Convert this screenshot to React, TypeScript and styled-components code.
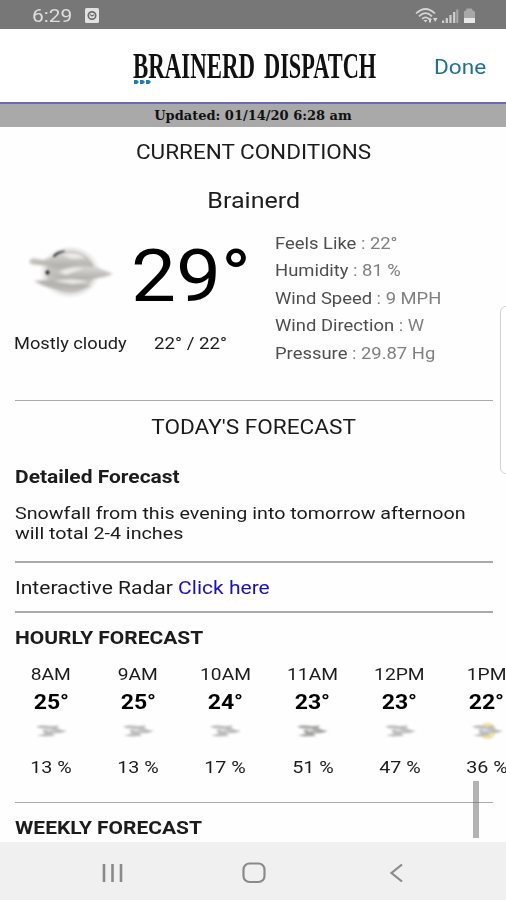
import React from 'react';
import styled, { createGlobalStyle } from 'styled-components';

const GlobalStyle = createGlobalStyle`
  * { box-sizing: border-box; }
  html, body { margin: 0; padding: 0; background: #fefefe; overflow: hidden; }
  body { font-family: Roboto, "Liberation Sans", sans-serif; color: #1c1c1c; }
`;

const Screen = styled.div`
  position: relative;
  width: 506px;
  height: 900px;
  overflow: hidden;
  display: flex;
  flex-direction: column;
  background: #fefefe;
`;

const Label = styled.span<{ $size: number; $stretch?: number; $from?: string; $bold?: boolean; $color?: string }>`
  display: inline-block;
  white-space: nowrap;
  font-size: ${(p) => p.$size}px;
  font-weight: ${(p) => (p.$bold ? 700 : 400)};
  color: ${(p) => p.$color ?? 'inherit'};
  transform: scaleX(${(p) => p.$stretch ?? 1.14});
  transform-origin: ${(p) => p.$from ?? 'left'} center;
`;

const StatusBar = styled.div`
  height: 29px;
  flex: none;
  display: flex;
  align-items: center;
  justify-content: space-between;
  padding: 2px 29px 0 32px;
  background: #777;
  color: #dedede;
`;

const StatusGroup = styled.div`
  display: flex;
  align-items: center;
`;

const ClockIcon = styled.svg`
  margin-left: 17px;
`;

const Header = styled.header`
  height: 75px;
  flex: none;
  display: grid;
  grid-template-columns: 133px 247px 1fr;
  align-items: center;
  background: #fff;
  border-bottom: 2px solid #6a6ab8;
`;

const Logo = styled.div`
  grid-column: 2;
  display: grid;
  grid-template-columns: 131px 116px;
  grid-template-rows: 36px 5px;
  height: 41px;
  margin-top: 4px;
  color: #111;
  font-family: "Liberation Serif", serif;
  line-height: 37px;
`;

const Word = styled.div`
  width: 100%;
  min-width: 0;
  height: 36px;
`;

const Dots = styled.svg`
  display: block;
  margin: -3.5px 0 0 1px;
`;

const DoneButton = styled.button`
  border: 0;
  padding: 0;
  margin: 3px 0 0 54px;
  background: none;
  font-family: inherit;
  text-align: left;
`;

const Updated = styled.div`
  height: 23px;
  flex: none;
  text-align: center;
  background: #a9a9a9;
  color: #111;
  font: 700 13px/23px "DejaVu Serif", serif;
`;

const Content = styled.main`
  flex: 1;
  min-height: 0;
  overflow: hidden;
  display: flex;
  flex-direction: column;
  padding: 0 13px 0 14.5px;
`;

const Line = styled.div<{ $h: number; $top?: number; $center?: boolean }>`
  flex: none;
  height: ${(p) => p.$h}px;
  line-height: ${(p) => p.$h}px;
  margin-top: ${(p) => p.$top ?? 0}px;
  text-align: ${(p) => (p.$center ? 'center' : 'left')};
  white-space: nowrap;
`;

const Rule = styled.div<{ $top: number }>`
  flex: none;
  height: 1.5px;
  margin-top: ${(p) => p.$top}px;
  background: #aaa;
`;

const Current = styled.section`
  flex: none;
  height: 143px;
  margin-top: 12px;
  display: grid;
  grid-template-columns: 260px 1fr;
`;

const Reading = styled.div`
  display: grid;
  grid-template-columns: 116px 1fr;
  grid-template-rows: 90px 52px;
  align-items: center;
`;

const Condition = styled.div`
  padding-left: 13px;
`;

const BigTemp = styled.div`
  height: 80px;
  line-height: 80px;
  margin-top: 9px;
  color: #000;
`;

const Caption = styled.div<{ $indent?: number }>`
  padding-left: ${(p) => p.$indent ?? 0}px;
  margin-left: -0.5px;
`;

const Stats = styled.ul`
  list-style: none;
  margin: 2px 0 0;
  padding: 0 0 0 0.5px;
`;

const Stat = styled.li`
  height: 27.6px;
  line-height: 27.6px;
  color: #4e4e4e;
`;

const StatValue = styled.span`
  color: #808080;
`;

const RadarLink = styled.a`
  color: #1a12b8;
`;

const Hours = styled.div`
  flex: none;
  display: flex;
  margin: 12px -13px 0 -7.2px;
  overflow: hidden;
`;

const Hour = styled.div`
  flex: 0 0 87.2px;
  height: 125px;
  display: grid;
  grid-template-rows: 28px 28px 30px 42px;
  justify-items: center;
  align-items: center;
`;

const NavBar = styled.nav`
  height: 58px;
  flex: none;
  display: grid;
  grid-template-columns: 84px 200px 84px;
  justify-content: center;
  justify-items: center;
  align-items: center;
  padding: 3px 0 0 2px;
  background: #f0f0f0;
`;

const ScrollThumb = styled.div`
  position: absolute;
  left: 473px;
  top: 781px;
  width: 5.5px;
  height: 57px;
  background: rgba(110, 110, 110, 0.52);
`;

const EdgePanel = styled.div`
  position: absolute;
  left: 500px;
  top: 306px;
  width: 14px;
  height: 168px;
  border: 1.5px solid #d2d2d2;
  border-radius: 6px;
  background: #fff;
`;

function LargeCloud() {
  return (
    <svg width="88" height="60" viewBox="0 0 88 60">
      <defs>
        <radialGradient id="disc" cx="50%" cy="50%" r="50%">
          <stop offset="0" stopColor="#b4b2af" />
          <stop offset="0.72" stopColor="#c6c4c1" />
          <stop offset="1" stopColor="#ececec" stopOpacity="0" />
        </radialGradient>
        <linearGradient id="wisp" x1="0" y1="0" x2="0" y2="1">
          <stop offset="0" stopColor="#dad8d5" />
          <stop offset="1" stopColor="#aeaba7" />
        </linearGradient>
        <filter id="soft" x="-20%" y="-20%" width="140%" height="140%"><feGaussianBlur stdDeviation="1.7" /></filter>
        <filter id="fine" x="-50%" y="-50%" width="200%" height="200%"><feGaussianBlur stdDeviation="0.8" /></filter>
      </defs>
      <ellipse cx="42" cy="31" rx="31" ry="27" fill="url(#disc)" />
      <g filter="url(#soft)">
        <path d="M1 20 L5 17 L15 19 L23 17 L33 13 Q48 9 60 19 L66 26 L52 23 Q36 29 20 25 L3 23Z" fill="url(#wisp)" />
        <path d="M22 34 Q38 24 55 26 L68 26 L85 33 L76 36 Q60 39 46 38 Q34 40 22 34Z" fill="url(#wisp)" />
        <path d="M6 40 L18 39 Q40 38 53 43 L64 45 L50 48 Q30 49 16 45Z" fill="#b5b3af" />
        <path d="M34 14 Q48 9 57 17 L44 18Z M31 31 Q44 25 56 27 L38 34Z M26 40 Q46 36 60 41 L45 43Z" fill="#ecebe9" />
      </g>
      <g filter="url(#fine)">
        <path d="M25 15 Q29 10 37 10 Q30 12 26 16Z" fill="#333" stroke="#444" strokeWidth="0.8" />
        <circle cx="19.5" cy="31.5" r="1.9" fill="#222" />
      </g>
    </svg>
  );
}

function SmallCloud({ tone = '#bcbcbc', sun = false }: { tone?: string; sun?: boolean }) {
  return (
    <svg width="34" height="20" viewBox="0 0 34 20">
      <defs>
        <filter id="haze" x="-20%" y="-20%" width="140%" height="140%"><feGaussianBlur stdDeviation="0.8" /></filter>
      </defs>
      <g filter="url(#haze)">
        {sun && <circle cx="17.5" cy="10" r="7.4" fill="#f6ecb0" stroke="#ecdc80" strokeWidth="1.3" />}
        <path
          d="M2 5.5 L8 4.3 L17 5 L25 4.5 L23 7 L28 9 L33 10 L27 12 L18 12.5 L21 15 L10 15.5 L3 14.5 L11 12.5 L8 9.5 L13 8 L5 7Z"
          fill={tone}
        />
        <path d="M10 8 L19 7 L16 9 L24 10 L14 10.5Z" fill="#dedede" />
      </g>
    </svg>
  );
}

const stats = [
  ['Feels Like', '22°'],
  ['Humidity', '81 %'],
  ['Wind Speed', '9 MPH'],
  ['Wind Direction', 'W'],
  ['Pressure', '29.87 Hg'],
];

const hours = [
  { time: '8AM', temp: '25°', rain: '13 %' },
  { time: '9AM', temp: '25°', rain: '13 %' },
  { time: '10AM', temp: '24°', rain: '17 %' },
  { time: '11AM', temp: '23°', rain: '51 %', tone: '#a4a4a2' },
  { time: '12PM', temp: '23°', rain: '47 %' },
  { time: '1PM', temp: '22°', rain: '36 %', sun: true },
];

export default function App() {
  return (
    <Screen>
      <GlobalStyle />
      <StatusBar>
        <StatusGroup>
          <Label $size={18.7} $stretch={1.12}>6:29</Label>
          <ClockIcon width="14" height="15" viewBox="0 0 14 15">
            <rect width="14" height="15" rx="1.5" fill="#e2e2e2" />
            <circle cx="7" cy="7.5" r="3.7" fill="none" stroke="#6c6c6c" strokeWidth="1.7" />
            <path d="M5 6.4 L7 8 L9 6.8" fill="none" stroke="#6c6c6c" strokeWidth="1.2" />
          </ClockIcon>
        </StatusGroup>
        <svg width="62" height="18" viewBox="0 0 62 18">
          <g fill="none" stroke="#d6d6d6" strokeWidth="1.7">
            <path d="M1 6.5 Q10.5 -2.5 20 6.5" />
            <path d="M4 9.3 Q10.5 3 17 9.3" />
            <path d="M7 12 Q10.5 8.6 14 12" />
          </g>
          <path d="M8.5 13 L12.5 13 L10.5 15.5Z M13 13 L15 10.5 L17 13 L16 13 L16 15.5 L14 15.5 L14 13Z M18 11 L22.5 11 L20.2 15Z" fill="#d6d6d6" />
          <g fill="#d0d0d0">
            <rect x="27" y="13.5" width="2.2" height="2.5" />
            <rect x="30.7" y="11" width="2.2" height="5" />
            <rect x="34.4" y="8" width="2.2" height="8" />
            <rect x="38.1" y="5" width="2.2" height="11" />
            <rect x="41.3" y="2.5" width="2" height="13.5" fill="#aaa" />
          </g>
          <path d="M49 5 Q49 3.5 51 3.5 L51.5 1.5 L57 1.5 L57.5 3.5 Q60 3.5 60 5 V16 H49Z" fill="#a8a8a8" />
          <rect x="49" y="11" width="11" height="5" fill="#e8e8e8" />
        </svg>
      </StatusBar>

      <Header>
        <Logo>
          <Word><Label $size={36.6} $stretch={0.625} $bold>BRAINERD</Label></Word>
          <Word><Label $size={36.6} $stretch={0.611} $bold>DISPATCH</Label></Word>
          <Dots width="18" height="4" viewBox="0 0 18 4">
            <path d="M0 0 H3 L5 2 L3 4 H0Z M6 0 H9 L11 2 L9 4 H6Z M12 0 H15 L17 2 L15 4 H12Z" fill="#1a7fb5" />
          </Dots>
        </Logo>
        <DoneButton>
          <Label $size={20} $stretch={1.13} $color="#1f7193">Done</Label>
        </DoneButton>
      </Header>
      <Updated>Updated: 01/14/20 6:28 am</Updated>

      <Content>
        <Line $h={30} $top={10} $center>
          <Label $size={20} $stretch={1.125} $from="center">CURRENT CONDITIONS</Label>
        </Line>
        <Line $h={30} $top={18.5} $center>
          <Label $size={22} $from="center">Brainerd</Label>
        </Line>

        <Current>
          <Reading>
            <Condition><LargeCloud /></Condition>
            <BigTemp><Label $size={71.5} $stretch={1.12}>29°</Label></BigTemp>
            <Caption><Label $size={16}>Mostly cloudy</Label></Caption>
            <Caption $indent={24}><Label $size={16} $stretch={1.17}>22° / 22°</Label></Caption>
          </Reading>
          <Stats>
            {stats.map(([name, value]) => (
              <Stat key={name}>
                <Label $size={16} $stretch={1.15}>{name} <StatValue>: {value}</StatValue></Label>
              </Stat>
            ))}
          </Stats>
        </Current>

        <Rule $top={29} />
        <Line $h={30} $top={10.5} $center>
          <Label $size={20} $stretch={1.13} $from="center">TODAY'S FORECAST</Label>
        </Line>
        <Line $h={20} $top={25}>
          <Label $size={18} $stretch={1.165} $bold>Detailed Forecast</Label>
        </Line>
        <Line $h={20} $top={16}>
          <Label $size={17.3} $stretch={1.14}>Snowfall from this evening into tomorrow afternoon</Label>
        </Line>
        <Line $h={20}>
          <Label $size={17.3} $stretch={1.14}>will total 2-4 inches</Label>
        </Line>
        <Rule $top={18.5} />
        <Line $h={20} $top={15.5}>
          <Label $size={18.2} $stretch={1.157}>Interactive Radar <RadarLink>Click here</RadarLink></Label>
        </Line>
        <Rule $top={13} />
        <Line $h={20} $top={15}>
          <Label $size={18.4} $stretch={1.14} $bold>HOURLY FORECAST</Label>
        </Line>
        <Hours>
          {hours.map((h) => (
            <Hour key={h.time}>
              <Label $size={17} $from="center" $stretch={1.13}>{h.time}</Label>
              <Label $size={20} $from="center" $stretch={1.15} $color="#000" $bold>{h.temp}</Label>
              <SmallCloud tone={h.tone} sun={h.sun} />
              <Label $size={17} $from="center" $stretch={1.16}>{h.rain}</Label>
            </Hour>
          ))}
        </Hours>
        <Rule $top={17} />
        <Line $h={20} $top={15}>
          <Label $size={18.4} $stretch={1.14} $bold>WEEKLY FORECAST</Label>
        </Line>
      </Content>

      <NavBar>
        <svg width="23" height="20" viewBox="0 0 23 20" stroke="#8a8a8a" strokeWidth="2.6">
          <path d="M3 1 V19 M11.5 1 V19 M20 1 V19" />
        </svg>
        <svg width="24" height="22" viewBox="0 0 24 22" fill="none" stroke="#8a8a8a" strokeWidth="2.2">
          <rect x="1.5" y="1.5" width="21" height="18.5" rx="6" />
        </svg>
        <svg width="15" height="20" viewBox="0 0 15 20" fill="none" stroke="#8a8a8a" strokeWidth="2.2">
          <path d="M13 1.5 L2.5 10 L13 18.5" />
        </svg>
      </NavBar>

      <EdgePanel />
      <ScrollThumb />
    </Screen>
  );
}
